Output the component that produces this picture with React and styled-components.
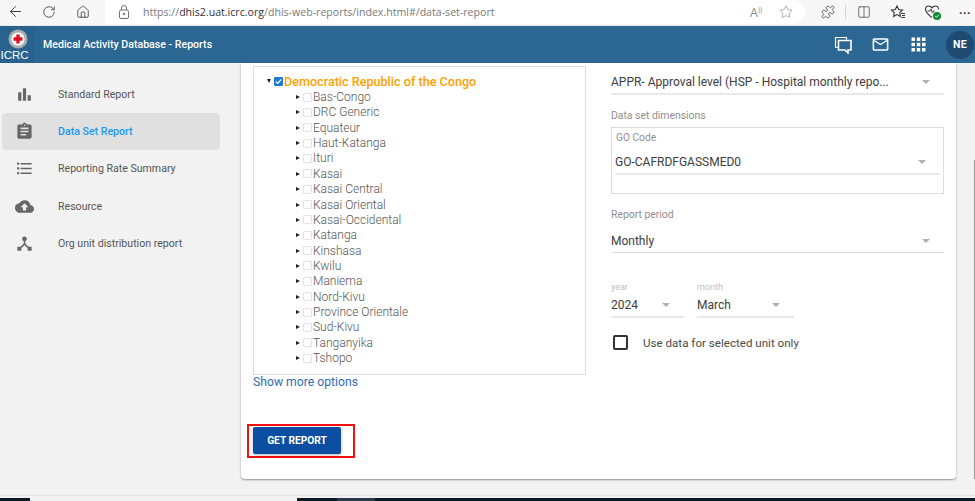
import React from "react";
import styled, { createGlobalStyle } from "styled-components";
import { ArrowLeft, RotateCw, Home, Star, Puzzle, Columns2 } from "lucide-react";
import {
  MdBarChart,
  MdAssignment,
  MdFormatListBulleted,
  MdCloudUpload,
  MdDeviceHub,
  MdMailOutline,
  MdApps,
} from "react-icons/md";

const GlobalStyle = createGlobalStyle`
  html, body {
    margin: 0;
    padding: 0;
    background: #f2f2f2;
  }
  * {
    box-sizing: border-box;
  }
`;

const orgUnits = [
  "Bas-Congo",
  "DRC Generic",
  "Equateur",
  "Haut-Katanga",
  "Ituri",
  "Kasai",
  "Kasai Central",
  "Kasai Oriental",
  "Kasai-Occidental",
  "Katanga",
  "Kinshasa",
  "Kwilu",
  "Maniema",
  "Nord-Kivu",
  "Province Orientale",
  "Sud-Kivu",
  "Tanganyika",
  "Tshopo",
];

const navItems = [
  { label: "Standard Report", Icon: MdBarChart },
  { label: "Data Set Report", Icon: MdAssignment, active: true },
  { label: "Reporting Rate Summary", Icon: MdFormatListBulleted },
  { label: "Resource", Icon: MdCloudUpload },
  { label: "Org unit distribution report", Icon: MdDeviceHub },
];

const Page = styled.div`
  width: 975px;
  height: 501px;
  overflow: hidden;
  display: flex;
  flex-direction: column;
  background: #f2f2f2;
  font-family: Roboto, "Liberation Sans", sans-serif;
`;

/* browser chrome */
const BrowserBar = styled.div`
  height: 26px;
  flex: none;
  display: flex;
  align-items: flex-start;
  background: #f7f7f7;
  border-bottom: 1px solid #ececec;
`;

const NavButtons = styled.div`
  display: flex;
  gap: 4px;
  margin-right: 7px;
`;

const ChromeButton = styled.div`
  width: ${(p) => p.$w || 30}px;
  height: 23px;
  flex: none;
  display: flex;
  align-items: center;
  justify-content: center;
  color: ${(p) => p.$color || "#3c3c3c"};
`;

const UrlPill = styled.div`
  width: 700px;
  height: 24px;
  flex: none;
  display: flex;
  align-items: center;
  padding: 0 4px 0 12px;
  margin-right: 6px;
  background: #fff;
  border-radius: 0 12px 12px 0;
`;

const UrlText = styled.div`
  flex: 1;
  margin-left: 12px;
  font-family: "Open Sans", sans-serif;
  font-size: 10.6px;
  color: #7a7a7a;
  white-space: nowrap;

  b {
    font-weight: 400;
    color: #333;
  }
`;

const ReadAloud = styled.span`
  font-family: "Open Sans", sans-serif;
  font-size: 12.5px;
  color: #8a8a8a;
`;

const ChromeDivider = styled.div`
  width: 1px;
  height: 14px;
  margin: 5px 1px 0 0;
  flex: none;
  background: #d6d6d6;
`;

const Dots = styled.span`
  font-size: 12px;
  font-weight: 700;
  letter-spacing: 0.5px;
  color: #333;
  margin-top: -4px;
`;

/* dhis2 header */
const Header = styled.header`
  height: 37px;
  flex: none;
  display: flex;
  align-items: center;
  background: #2c6693;
  color: #fff;
`;

const LogoCell = styled.div`
  width: 35px;
  height: 100%;
  flex: none;
  display: flex;
  flex-direction: column;
  align-items: center;
  background: #2a628e;
  padding-top: 3px;
`;

const LogoText = styled.span`
  font-family: "Liberation Sans", sans-serif;
  font-size: 11.5px;
  line-height: 11px;
  margin-top: 1px;
  margin-left: -6px;
`;

const Title = styled.div`
  flex: 1;
  margin-left: 8px;
  font-size: 10.6px;
  font-weight: 500;
`;

const HeaderIcon = styled.div`
  width: 37.5px;
  height: 24px;
  flex: none;
  display: flex;
  align-items: center;
  justify-content: center;
`;

const Avatar = styled.div`
  width: 28px;
  height: 28px;
  flex: none;
  margin: 0 1px 0 9px;
  border-radius: 50%;
  display: flex;
  align-items: center;
  justify-content: center;
  background: #1f4a72;
  font-size: 10.5px;
  font-weight: 700;
  letter-spacing: 0.3px;
`;

/* body */
const Main = styled.div`
  flex: 1;
  min-height: 0;
  display: flex;
  padding-bottom: 16px;
`;

const Sidebar = styled.nav`
  width: 241px;
  flex: none;
  padding: 12.5px 21px 0 2px;
`;

const NavItem = styled.div`
  height: 37.3px;
  display: flex;
  align-items: center;
  border-radius: 4px;
  background: ${(p) => (p.$active ? "#e0e0e0" : "transparent")};
  color: ${(p) => (p.$active ? "#2196f3" : "#555")};
  font-size: 10.6px;
  font-weight: ${(p) => (p.$active ? 500 : 400)};
`;

const NavIcon = styled.span`
  width: 44px;
  margin-right: 12px;
  flex: none;
  display: flex;
  justify-content: center;
  color: #666;
`;

const Card = styled.section`
  width: 715px;
  flex: none;
  display: flex;
  gap: 25px;
  padding: 3px 12px 0;
  background: #fff;
  border-radius: 0 0 4px 4px;
  box-shadow: 0 1px 2px rgba(0, 0, 0, 0.4);
`;

const LeftColumn = styled.div`
  width: 333px;
  flex: none;
  display: flex;
  flex-direction: column;
`;

const TreeBox = styled.div`
  height: 309px;
  padding: 7px 0 8px 13px;
  border: 1px solid #dcdcdc;
`;

const TreeRow = styled.div`
  height: 15.37px;
  display: flex;
  align-items: center;
  white-space: nowrap;
  font-size: ${(p) => (p.$root ? "12.6px" : "12px")};
  font-weight: ${(p) => (p.$root ? 500 : 300)};
  color: ${(p) => (p.$root ? "#ffa000" : "#555")};
`;

const TreeChildren = styled.div`
  padding-left: 29px;
`;

const ArrowRight = styled.span`
  width: 0;
  height: 0;
  flex: none;
  margin-right: 3px;
  border-left: 4px solid #222;
  border-top: 2.5px solid transparent;
  border-bottom: 2.5px solid transparent;
`;

const ArrowDown = styled.span`
  width: 0;
  height: 0;
  flex: none;
  margin: -2px 3px 0 0;
  border-top: 4px solid #222;
  border-left: 2.5px solid transparent;
  border-right: 2.5px solid transparent;
`;

const TreeCheck = styled.span`
  width: 9px;
  height: 9px;
  flex: none;
  margin-right: 1px;
  display: flex;
  align-items: center;
  justify-content: center;
  border-radius: 1px;
  border: 1px solid ${(p) => (p.$checked ? "#1f7ad6" : "#e2e2e2")};
  background: ${(p) => (p.$checked ? "#1f7ad6" : "#fff")};
`;

const MoreLink = styled.a`
  height: 15px;
  line-height: 15px;
  font-size: 12.2px;
  color: #2f6db5;
`;

const Highlight = styled.div`
  align-self: flex-start;
  margin: 34px 0 0 -6px;
  padding: 1px 12px 2px 4px;
  border: 2px solid #f01010;
`;

const ReportButton = styled.button`
  width: 88px;
  height: 27px;
  display: block;
  padding: 0;
  border: none;
  border-radius: 2px;
  background: #0b4ea2;
  color: #fff;
  font-family: inherit;
  font-size: 10.2px;
  font-weight: 700;
  box-shadow: 0 1px 3px rgba(0, 0, 0, 0.3);
`;

const RightColumn = styled.div`
  width: 333px;
  flex: none;
  margin-top: 5px;
  display: flex;
  flex-direction: column;
`;

const SelectBox = styled.div`
  width: ${(p) => (p.$w ? `${p.$w}px` : "auto")};
  height: 24px;
  flex: none;
  display: flex;
  align-items: center;
  justify-content: space-between;
  padding-right: 14px;
  border-bottom: ${(p) => (p.$thin ? "1px solid #ddd" : "2px solid #e9e9e9")};
  font-size: 12px;
  color: #3d3d3d;
  white-space: nowrap;
`;

const Caret = styled.span`
  width: 0;
  height: 0;
  flex: none;
  border-top: 4.5px solid #b0b0b0;
  border-left: 4.5px solid transparent;
  border-right: 4.5px solid transparent;
`;

const FieldLabel = styled.div`
  margin-top: 14px;
  height: 14px;
  line-height: 14px;
  font-size: 10.4px;
  color: #8f8f8f;
`;

const DimensionBox = styled.div`
  height: 67px;
  margin-top: 4px;
  padding: 3px 3px 0 3px;
  border: 1px solid #dcdcdc;
`;

const DimensionName = styled.div`
  height: 14px;
  line-height: 14px;
  margin: 0 0 6px 1px;
  font-size: 10.2px;
  color: #8f8f8f;
`;

const PeriodSpacer = styled.div`
  height: 7px;
  flex: none;
`;

const PeriodRow = styled.div`
  margin-top: 28px;
  display: flex;
  gap: 13px;
`;

const MiniLabel = styled.div`
  height: 12px;
  line-height: 12px;
  margin-bottom: 1px;
  font-size: 9px;
  color: #bdbdbd;
`;

const CheckRow = styled.label`
  margin: 17px 0 0 2px;
  display: flex;
  align-items: center;
  gap: 15px;
  font-size: 11.6px;
  color: #4a4a4a;
`;

const SquareCheck = styled.span`
  width: 15px;
  height: 15px;
  flex: none;
  border: 2px solid #333;
  border-radius: 2px;
`;

const ScrollGutter = styled.div`
  flex: 1;
  display: flex;
  justify-content: flex-end;
`;

const ScrollThumb = styled.div`
  width: 1px;
  margin-top: 97px;
  background: #9a9a9a;
`;

const Taskbar = styled.div`
  height: 6px;
  flex: none;
  display: flex;
  flex-direction: column;
  border-top: 1px solid #e4e4e4;
`;

const TaskbarStrip = styled.div`
  margin-top: 2px;
  flex: 1;
  display: flex;
`;

const TaskbarPart = styled.div`
  width: ${(p) => (p.$w ? `${p.$w}px` : "auto")};
  flex: ${(p) => (p.$w ? "none" : 1)};
  background: ${(p) => p.$bg || "#0d1a26"};
`;

const LogoMark = () => (
  <svg width="20" height="20" viewBox="0 0 20 20">
    <circle cx="10" cy="10" r="9.5" fill="#a9adb0" />
    <circle cx="10" cy="10" r="6.6" fill="#fff" />
    <path d="M8.3 5.5h3.4v2.8h2.8v3.4h-2.8v2.8H8.3v-2.8H5.5V8.3h2.8z" fill="#e30f1c" />
  </svg>
);

const LockIcon = () => (
  <svg width="14" height="16" viewBox="0 0 14 16" fill="none" stroke="#6e6e6e" strokeWidth="1">
    <rect x="2.5" y="6" width="9" height="8.5" rx="1.5" />
    <path d="M4.5 6V4a2.5 2.5 0 0 1 5 0v2" />
    <circle cx="7" cy="10" r="0.8" fill="#6e6e6e" />
  </svg>
);

const FavoritesIcon = () => (
  <svg width="16" height="16" viewBox="0 0 16 16" fill="none" stroke="#333" strokeWidth="1.1">
    <path d="M7 2l1.7 3.6 3.8.5-2.8 2.6.7 3.8L7 10.6l-3.4 1.9.7-3.8L1.5 6.1l3.8-.5z" />
    <path d="M11 9.5h4M12 11.5h3M11.5 13.5h3.5" />
  </svg>
);

const HealthIcon = () => (
  <svg width="18" height="18" viewBox="0 0 18 18" fill="none">
    <path
      d="M8 14.5C3 11 1.5 8.6 1.5 6.3 1.5 4.2 3.1 3 4.8 3 6.100 3 7.300 3.700 8 4.900 8.700 3.700 9.900 3 11.200 3c1.700 0 3.300 1.200 3.300 3.300"
      stroke="#333"
      strokeWidth="1.1"
    />
    <path d="M3.500 8h2.500l1-2 1.500 4 1-2h1.500" stroke="#333" strokeWidth="0.9" />
    <circle cx="13" cy="13" r="4" fill="#12863a" />
    <path d="M11.200 13l1.300 1.300 2.300-2.500" stroke="#fff" strokeWidth="1" />
  </svg>
);

const ChatIcon = () => (
  <svg width="18" height="18" viewBox="0 0 18 18" fill="none" stroke="#fff" strokeWidth="1.600">
    <path d="M3.800 11.500H1.500V1.500h11v2.300" strokeWidth="1.200" />
    <path d="M4.500 4.500h12.500v9.500h-3v3l-3-3H4.500z" />
  </svg>
);

const App = () => {
  return (
    <Page>
      <GlobalStyle />
      <BrowserBar>
        <NavButtons>
          <ChromeButton><ArrowLeft size={17} strokeWidth={1.4} /></ChromeButton>
          <ChromeButton><RotateCw size={14} strokeWidth={1.4} /></ChromeButton>
          <ChromeButton><Home size={14} strokeWidth={1.4} /></ChromeButton>
        </NavButtons>
        <UrlPill>
          <LockIcon />
          <UrlText>
            https://<b>dhis2.uat.icrc.org</b>/dhis-web-reports/index.html#/data-set-report
          </UrlText>
          <ChromeButton><ReadAloud>A<sup style={{ fontSize: 7 }}>))</sup></ReadAloud></ChromeButton>
          <ChromeButton $color="#777"><Star size={14} strokeWidth={1} /></ChromeButton>
        </UrlPill>
        <ChromeButton $w={34}><Puzzle size={14} strokeWidth={1.3} /></ChromeButton>
        <ChromeDivider />
        <ChromeButton $w={34}><Columns2 size={14} strokeWidth={1.2} /></ChromeButton>
        <ChromeButton $w={34}><FavoritesIcon /></ChromeButton>
        <ChromeButton $w={35}><HealthIcon /></ChromeButton>
        <ChromeButton $w={30}><Dots>...</Dots></ChromeButton>
      </BrowserBar>

      <Header>
        <LogoCell>
          <LogoMark />
          <LogoText>ICRC</LogoText>
        </LogoCell>
        <Title>Medical Activity Database - Reports</Title>
        <HeaderIcon><ChatIcon /></HeaderIcon>
        <HeaderIcon><MdMailOutline size={19} /></HeaderIcon>
        <HeaderIcon><MdApps size={21} /></HeaderIcon>
        <Avatar>NE</Avatar>
      </Header>

      <Main>
        <Sidebar>
          {navItems.map(({ label, Icon, active }) => (
            <NavItem key={label} $active={active}>
              <NavIcon><Icon size={19} /></NavIcon>
              {label}
            </NavItem>
          ))}
        </Sidebar>

        <Card>
          <LeftColumn>
            <TreeBox>
              <TreeRow $root>
                <ArrowDown />
                <TreeCheck $checked>
                  <svg width="7" height="7" viewBox="0 0 7 7" fill="none" stroke="#fff" strokeWidth="1.200">
                    <path d="M0.800 3.500l1.900 1.900 3.500-3.900" />
                  </svg>
                </TreeCheck>
                Democratic Republic of the Congo
              </TreeRow>
              <TreeChildren>
                {orgUnits.map((unit) => (
                  <TreeRow key={unit}>
                    <ArrowRight />
                    <TreeCheck />
                    {unit}
                  </TreeRow>
                ))}
              </TreeChildren>
            </TreeBox>
            <MoreLink>Show more options</MoreLink>
            <Highlight>
              <ReportButton>GET REPORT</ReportButton>
            </Highlight>
          </LeftColumn>

          <RightColumn>
            <SelectBox>
              APPR- Approval level (HSP - Hospital monthly repo...
              <Caret />
            </SelectBox>
            <FieldLabel>Data set dimensions</FieldLabel>
            <DimensionBox>
              <DimensionName>GO Code</DimensionName>
              <SelectBox>
                GO-CAFRDFGASSMED0
                <Caret />
              </SelectBox>
            </DimensionBox>
            <FieldLabel>Report period</FieldLabel>
            <PeriodSpacer />
            <SelectBox $thin>
              Monthly
              <Caret />
            </SelectBox>
            <PeriodRow>
              <div>
                <MiniLabel>year</MiniLabel>
                <SelectBox $w={73}>
                  2024
                  <Caret />
                </SelectBox>
              </div>
              <div>
                <MiniLabel>month</MiniLabel>
                <SelectBox $w={97}>
                  March
                  <Caret />
                </SelectBox>
              </div>
            </PeriodRow>
            <CheckRow>
              <SquareCheck />
              Use data for selected unit only
            </CheckRow>
          </RightColumn>
        </Card>

        <ScrollGutter>
          <ScrollThumb />
        </ScrollGutter>
      </Main>

      <Taskbar>
        <TaskbarStrip>
          <TaskbarPart $w={30} />
          <TaskbarPart $w={267} $bg="#f2f2f2" />
          <TaskbarPart $w={40} />
          <TaskbarPart $w={38} $bg="#2b3a48" />
          <TaskbarPart />
        </TaskbarStrip>
      </Taskbar>
    </Page>
  );
};

export default App;
